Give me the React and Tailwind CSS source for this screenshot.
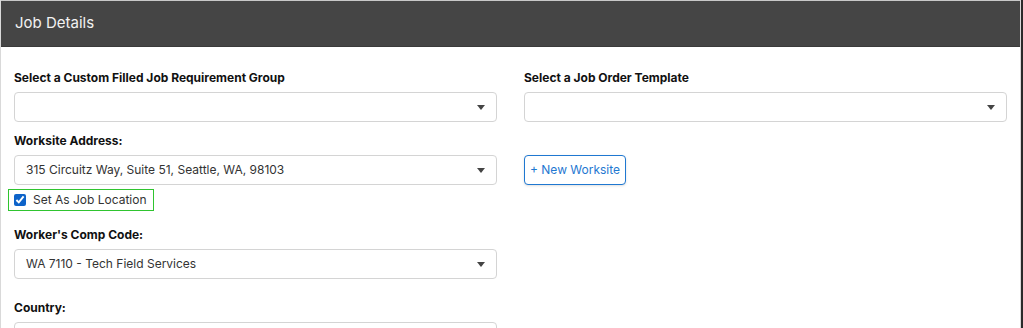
import { useState } from "react";

const Caret = () => (
  <svg width="8" height="5" viewBox="0 0 8 5" className="shrink-0">
    <path d="M0 0h8L4 5z" fill="#444" />
  </svg>
);

const SelectBox = ({ value }) => (
  <div className="h-[30px] border border-[#d4d4d4] rounded-[4px] bg-white flex items-center justify-between pl-[11px] pr-[11px] text-[12px] text-[#333]">
    <span>{value}</span>
    <Caret />
  </div>
);

const Label = ({ children }) => (
  <div className="text-[12px] font-bold text-[#111] leading-[16px] mb-[6px]">{children}</div>
);

const App = () => {
  const [jobLocation, setJobLocation] = useState(true);

  return (
    <div className="w-[1023px] h-[328px] bg-[#2a2a2a] overflow-hidden" style={{ fontFamily: "Inter, 'Open Sans', sans-serif" }}>
      <div className="w-[1021px] h-[328px] bg-white border-l border-r border-[#d9d9d9]">
        {/* HEADER */}
        <div className="h-[47px] bg-[#454545] border-t border-[#c8c8c8] border-b border-b-[#3a3a3a] flex items-center px-[14px]">
          <h1 className="text-[15px] text-[#f2f2f2] font-normal">Job Details</h1>
        </div>

        <div className="px-[13px] pt-[23px]">
          <div className="grid grid-cols-2 gap-x-[27px]">
            <div>
              <Label>Select a Custom Filled Job Requirement Group</Label>
              <SelectBox value="" />
            </div>
            <div>
              <Label>Select a Job Order Template</Label>
              <SelectBox value="" />
            </div>

            <div className="mt-[11px]">
              <Label>Worksite Address:</Label>
              <SelectBox value="315 Circuitz Way, Suite 51, Seattle, WA, 98103" />
              <label className="mt-[4px] -ml-[6px] w-[146px] h-[22px] border border-[#2fc42f] flex items-center gap-[7px] pl-[5px] text-[12px] text-[#333] whitespace-nowrap cursor-pointer">
                <input
                  type="checkbox"
                  checked={jobLocation}
                  onChange={() => setJobLocation(!jobLocation)}
                  className="w-[12px] h-[12px] shrink-0 accent-[#0d63c9]"
                />
                Set As Job Location
              </label>
            </div>
            <div className="mt-[11px] pt-[22px]">
              <button className="h-[30px] px-[5px] border border-[#1f78d1] rounded-[4px] text-[12px] text-[#1f78d1] bg-white shadow-sm">
                + New Worksite
              </button>
            </div>

            <div className="mt-[16px]">
              <Label>Worker's Comp Code:</Label>
              <SelectBox value="WA 7110 - Tech Field Services" />
            </div>
            <div />

            <div className="mt-[21px]">
              <Label>Country:</Label>
              <SelectBox value="" />
            </div>
          </div>
        </div>
      </div>
    </div>
  );
};

export default App;
